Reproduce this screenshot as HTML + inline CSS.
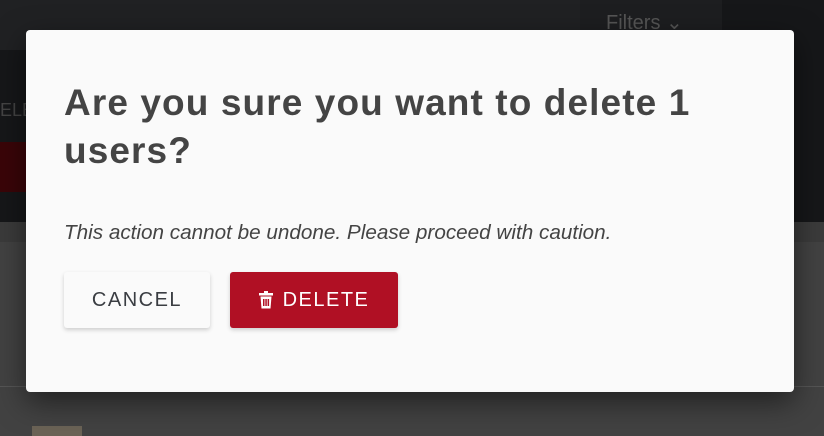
<!DOCTYPE html>
<html><head><style>
body{margin:0;width:824px;height:436px;overflow:hidden;position:relative;background:#424242;font-family:"Liberation Sans",sans-serif}
.bg{position:absolute}
.modal{position:absolute;left:26px;top:30px;width:768px;height:362px;background:#fafafa;border-radius:4px;box-shadow:0 10px 30px rgba(0,0,0,.5)}
h1{position:absolute;left:38px;top:49px;margin:0;font-size:37px;line-height:48px;font-weight:bold;color:#444;width:660px;letter-spacing:1.1px}
p{position:absolute;left:38px;top:191px;margin:0;font-size:20.7px;font-style:italic;color:#444}
.btn{position:absolute;top:242px;height:56px;border-radius:3px;font-size:20px;letter-spacing:1.5px;display:flex;align-items:center;justify-content:center;box-shadow:0 2px 4px rgba(0,0,0,.18)}
.c{left:38px;width:146px;background:#fafafa;color:#3a3d42}
.d{left:204px;width:168px;background:#b01024;color:#fff}
</style></head><body>
<div class="bg" style="left:0;top:0;width:824px;height:222px;background:#161719"></div>
<div class="bg" style="left:0;top:0;width:580px;height:50px;background:#202123"></div>
<div class="bg" style="left:580px;top:0;width:142px;height:50px;background:#1d1e20"></div>
<div class="bg" style="left:606px;top:10px;color:#555;font-size:20px">Filters ⌄</div>
<div class="bg" style="left:0;top:100px;color:#444;font-size:18px">ELE</div>
<div class="bg" style="left:0;top:142px;width:30px;height:50px;background:#3a0508"></div>
<div class="bg" style="left:0;top:222px;width:824px;height:20px;background:#3b3b3b"></div>
<div class="bg" style="left:0;top:386px;width:824px;height:1px;background:#555"></div>
<div class="bg" style="left:32px;top:426px;width:50px;height:10px;background:#6b6356"></div>
<div class="modal">
<h1>Are you sure you want to delete 1 users?</h1>
<p>This action cannot be undone. Please proceed with caution.</p>
<div class="btn c">CANCEL</div>
<div class="btn d"><svg width="14" height="18" viewBox="0 0 14 18" style="margin-right:10px"><rect x="0" y="2" width="14" height="2.5" fill="#fff"/><rect x="5" y="0" width="4" height="2" fill="#fff"/><path d="M1.5 5.5h11l-1 12h-9z" fill="#fff"/><rect x="4" y="8" width="1.5" height="7" fill="#b01024"/><rect x="6.3" y="8" width="1.5" height="7" fill="#b01024"/><rect x="8.6" y="8" width="1.5" height="7" fill="#b01024"/></svg>DELETE</div>
</div>
</body></html>
